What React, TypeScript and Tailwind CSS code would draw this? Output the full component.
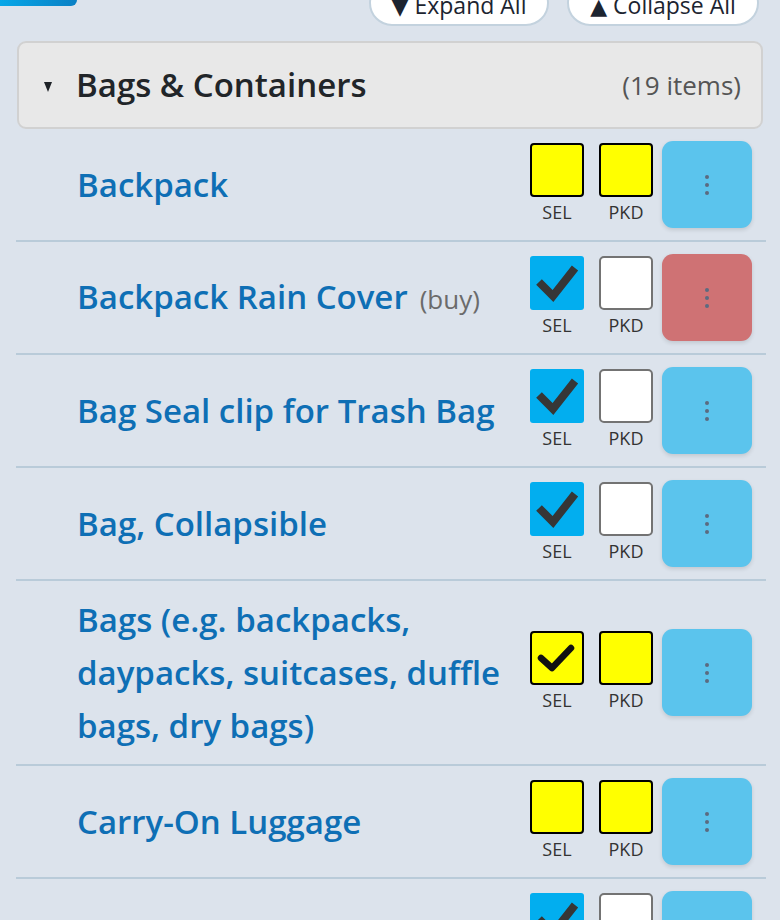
type BoxState = "yellow" | "yellowChecked" | "checked" | "empty";

interface Item {
  name: string;
  note?: string;
  sel: BoxState;
  pkd: BoxState;
  flagged?: boolean;
}

const items: Item[] = [
  { name: "Backpack", sel: "yellow", pkd: "yellow" },
  { name: "Backpack Rain Cover", note: "(buy)", sel: "checked", pkd: "empty", flagged: true },
  { name: "Bag Seal clip for Trash Bag", sel: "checked", pkd: "empty" },
  { name: "Bag, Collapsible", sel: "checked", pkd: "empty" },
  {
    name: "Bags (e.g. backpacks, daypacks, suitcases, duffle bags, dry bags)",
    sel: "yellowChecked",
    pkd: "yellow",
  },
  { name: "Carry-On Luggage", sel: "yellow", pkd: "yellow" },
  { name: "Clip, Small (for bags)", sel: "checked", pkd: "empty" },
];

const font = { fontFamily: '"Open Sans", "Noto Sans", "DejaVu Sans", sans-serif' };

function Box({ state }: { state: BoxState }) {
  if (state === "checked") {
    return (
      <div className="w-[54px] h-[54px] rounded-[3px] bg-[#02aeef] flex items-center justify-center">
        <svg width="54" height="54" viewBox="0 0 54 54">
          <polyline
            points="9,26 23,40 45,12"
            fill="none"
            stroke="#363636"
            strokeWidth="8"
            strokeLinejoin="miter"
          />
        </svg>
      </div>
    );
  }
  if (state === "empty") {
    return <div className="w-[54px] h-[54px] rounded-[5px] bg-white border-2 border-[#737373]" />;
  }
  return (
    <div className="w-[54px] h-[54px] rounded-[4px] bg-[#ffff00] border-2 border-black">
      {state === "yellowChecked" && (
        <svg width="50" height="50" viewBox="0 0 50 50">
          <polyline
            points="9,25 20,35 39,15"
            fill="none"
            stroke="#111"
            strokeWidth="6.5"
            strokeLinecap="round"
            strokeLinejoin="round"
          />
        </svg>
      )}
    </div>
  );
}

function Control({ label, state }: { label: string; state: BoxState }) {
  return (
    <div className="flex flex-col items-center">
      <Box state={state} />
      <span className="text-[18px] leading-[30px] text-[#333]">{label}</span>
    </div>
  );
}

function Row({ item }: { item: Item }) {
  return (
    <div className="flex items-center gap-4 border-b-2 border-[#b9cbd9] pl-[61px] pr-[14px] py-[12px]">
      <div className="flex-1 min-w-0 text-[33px] leading-[53px] font-semibold text-[#0e6fb5]">
        {item.name}
        {item.note && (
          <span className="ml-3 text-[26px] font-normal text-[#6b6b6b]">{item.note}</span>
        )}
      </div>
      <div className="flex items-center">
        <div className="flex gap-[15px]">
          <Control label="SEL" state={item.sel} />
          <Control label="PKD" state={item.pkd} />
        </div>
        <button
          className={`ml-[9px] w-[90px] h-[87px] rounded-[11px] flex items-center justify-center shadow-[0_2px_4px_rgba(0,0,0,0.12)] ${
            item.flagged ? "bg-[#cf7274]" : "bg-[#5bc4ed]"
          }`}
        >
          <svg width="8" height="26" viewBox="0 0 8 26">
            <circle cx="4" cy="5" r="2" fill="#5b6b80" />
            <circle cx="4" cy="13" r="2" fill="#5b6b80" />
            <circle cx="4" cy="21" r="2" fill="#5b6b80" />
          </svg>
        </button>
      </div>
    </div>
  );
}

export default function App() {
  return (
    <div className="min-h-screen bg-[#dce3ec] overflow-hidden" style={font}>
      {/* Toolbar (scrolled partly out of view) */}
      <div className="flex items-start justify-between pr-[21px]">
        <div className="h-[6px] w-[77px] rounded-br-[6px] bg-gradient-to-r from-[#06a7e8] to-[#0a80c4]" />
        <div className="-mt-[20px] flex gap-[18px]">
          <button className="w-[180px] h-[46px] pt-[4px] rounded-full border-2 border-[#c3d2de] bg-white text-[23px] font-medium text-[#1c2430] flex items-center justify-center gap-[6px]">
            <span className="text-[22px]">▼</span>Expand All
          </button>
          <button className="w-[192px] h-[46px] pt-[4px] rounded-full border-2 border-[#c3d2de] bg-white text-[23px] font-medium text-[#1c2430] flex items-center justify-center gap-[6px]">
            <span className="text-[22px]">▲</span>Collapse All
          </button>
        </div>
      </div>

      <div className="pl-[16px] pr-[14px] mt-[15px]">
        {/* Category header */}
        <div className="ml-[1px] mr-[3px] h-[88px] rounded-[9px] border-2 border-[#d1d1d1] bg-[#e8e8e8] flex items-center pl-[25px] pr-[20px]">
          <svg width="8" height="10" viewBox="0 0 8 10" className="mt-[3px]">
            <polygon points="0,0 8,0 4,10" fill="#1f2328" />
          </svg>
          <span className="ml-[24px] flex-1 text-[33px] font-semibold text-[#212529]">
            Bags &amp; Containers
          </span>
          <span className="text-[26px] text-[#555]">(19 items)</span>
        </div>

        {/* Items */}
        <div>
          {items.map((item) => (
            <Row key={item.name} item={item} />
          ))}
        </div>
      </div>
    </div>
  );
}
